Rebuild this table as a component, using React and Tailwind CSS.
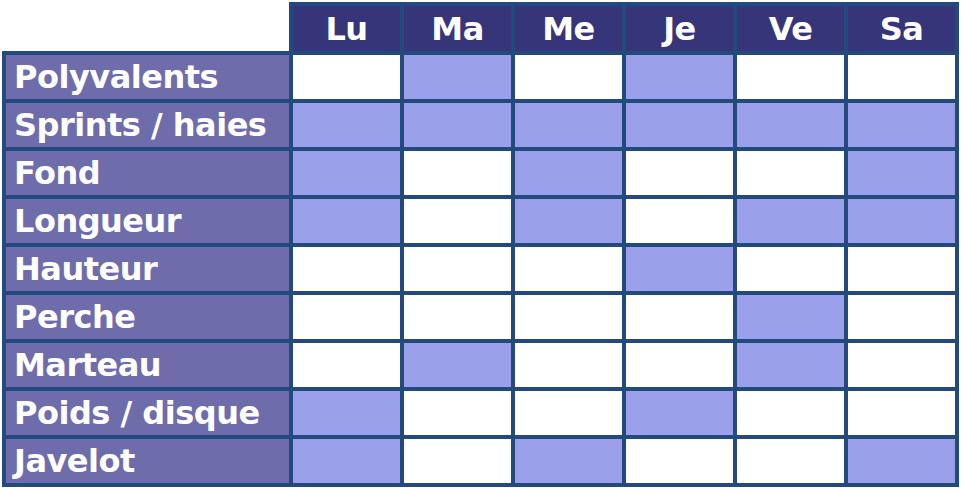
import React from "react";

const days = ["Lu", "Ma", "Me", "Je", "Ve", "Sa"];

// 1 = colored cell, 0 = white
const rows = [
  { name: "Polyvalents", cells: [0, 1, 0, 1, 0, 0] },
  { name: "Sprints / haies", cells: [1, 1, 1, 1, 1, 1] },
  { name: "Fond", cells: [1, 0, 1, 0, 0, 1] },
  { name: "Longueur", cells: [1, 0, 1, 0, 1, 1] },
  { name: "Hauteur", cells: [0, 0, 0, 1, 0, 0] },
  { name: "Perche", cells: [0, 0, 0, 0, 1, 0] },
  { name: "Marteau", cells: [0, 1, 0, 0, 1, 0] },
  { name: "Poids / disque", cells: [1, 0, 0, 1, 0, 0] },
  { name: "Javelot", cells: [1, 0, 1, 0, 0, 1] },
];

const App = () => {
  return (
    <div className="w-[961px] h-[490px] bg-white pt-[2px] pl-[2px]" style={{ fontFamily: '"DejaVu Sans", sans-serif' }}>
      <table className="table-fixed border-collapse w-[957px]">
        <colgroup>
          <col className="w-[287px]" />
          {days.map((d) => (
            <col key={d} />
          ))}
        </colgroup>
        <thead>
          <tr className="h-[49px]">
            <th className="p-0"></th>
            {days.map((d) => (
              <th
                key={d}
                className="p-0 border-[4px] border-[#234a7c] bg-[#36357a] text-white text-[32px] font-bold text-center align-middle leading-none tracking-[-0.5px]"
              >
                {d}
              </th>
            ))}
          </tr>
        </thead>
        <tbody>
          {rows.map((row) => (
            <tr key={row.name} className="h-[48px]">
              <td className="p-0 pl-[8px] border-[4px] border-[#234a7c] bg-[#6f6cab] text-white text-[32px] font-bold leading-none whitespace-nowrap tracking-[-0.5px]">
                {row.name}
              </td>
              {row.cells.map((c, i) => (
                <td
                  key={i}
                  className={
                    c
                      ? "p-0 border-[4px] border-[#234a7c] bg-[#9ba0eb]"
                      : "p-0 border-[4px] border-[#234a7c] bg-white"
                  }
                ></td>
              ))}
            </tr>
          ))}
        </tbody>
      </table>
    </div>
  );
};

export default App;
